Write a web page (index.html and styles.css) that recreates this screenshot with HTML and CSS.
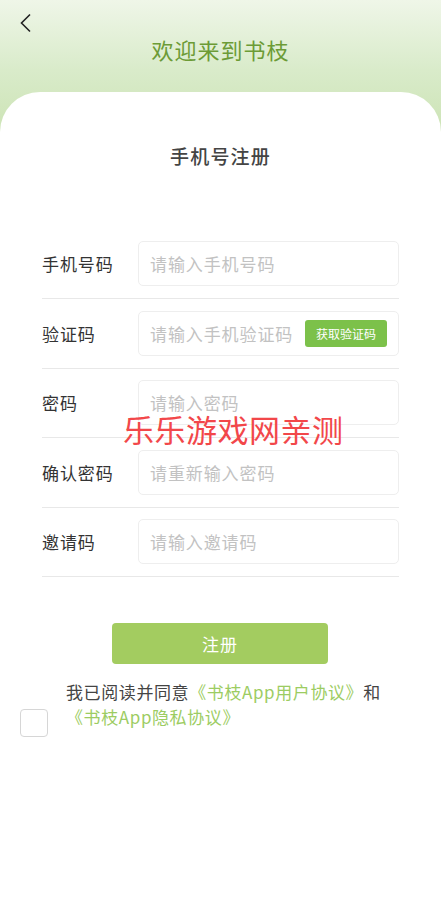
FILE: index.html
```html
<!DOCTYPE html>
<html lang="zh-CN">
<head>
    <meta charset="UTF-8">
    <meta name="viewport" content="width=device-width, initial-scale=1.0">
    <link rel="stylesheet" href="styles.css">
</head>
<body>
    <div class="page">
        <div class="header">
            <div class="back">
                <svg width="14" height="20" viewBox="0 0 14 20"><path d="M11 1.5 L2.5 10 L11 18.5" fill="none" stroke="#222" stroke-width="1.6"/></svg>
            </div>
            <h1>欢迎来到书枝</h1>
        </div>
        <div class="card">
            <h2>手机号注册</h2>
            <div class="form">
                <div class="row">
                    <div class="label">手机号码</div>
                    <div class="field"><span class="placeholder">请输入手机号码</span></div>
                </div>
                <div class="row">
                    <div class="label">验证码</div>
                    <div class="field">
                        <span class="placeholder">请输入手机验证码</span>
                        <div class="code-btn">获取验证码</div>
                    </div>
                </div>
                <div class="row">
                    <div class="label">密码</div>
                    <div class="field"><span class="placeholder">请输入密码</span></div>
                </div>
                <div class="row">
                    <div class="label">确认密码</div>
                    <div class="field"><span class="placeholder">请重新输入密码</span></div>
                </div>
                <div class="row">
                    <div class="label">邀请码</div>
                    <div class="field"><span class="placeholder">请输入邀请码</span></div>
                </div>
                <div class="watermark">乐乐游戏网亲测</div>
            </div>
            <div class="submit">注册</div>
            <div class="agree">
                <div class="checkbox"></div>
                <div class="agree-text">我已阅读并同意<span class="link">《书枝App用户协议》</span>和<br><span class="link">《书枝App隐私协议》</span></div>
            </div>
        </div>
    </div>
</body>
</html>
```

FILE: styles.css
```css
body {
    margin: 0;
    font-family: "Noto Sans CJK SC", "Noto Sans", sans-serif;
    background-color: #fff;
}
.page {
    width: 441px;
    height: 906px;
    overflow: hidden;
    background: linear-gradient(180deg, #eff6e8 0px, #d9ebca 70px, #cde4b6 130px);
}
.header {
    height: 92px;
    position: relative;
}
.back {
    position: absolute;
    left: 19px;
    top: 13px;
}
.header h1 {
    margin: 0;
    padding-top: 32px;
    text-align: center;
    font-size: 22px;
    font-weight: 400;
    line-height: 34px;
    letter-spacing: 1px;
    color: #6c9b36;
}
.card {
    background-color: #fff;
    border-radius: 40px 40px 0 0;
    height: 814px;
    box-sizing: border-box;
    padding-top: 51px;
}
.card h2 {
    margin: 0;
    text-align: center;
    font-size: 19px;
    font-weight: 500;
    line-height: 26px;
    letter-spacing: 1.2px;
    color: #444;
}
.form {
    position: relative;
    margin: 72px 42px 0 42px;
}
.row {
    display: flex;
    align-items: center;
    height: 69.5px;
    border-bottom: 1px solid #e8e8e8;
    box-sizing: border-box;
    padding-bottom: 12px;
    padding-top: 12px;
}
.row:first-child {
    height: 58px;
    padding-top: 0;
}
.label {
    width: 96px;
    font-size: 17px;
    letter-spacing: 0.9px;
    color: #333;
}
.field {
    flex: 1;
    height: 45px;
    border: 1px solid #eeeeee;
    border-radius: 5px;
    box-sizing: border-box;
    display: flex;
    align-items: center;
    justify-content: space-between;
    padding: 0 11px 0 11px;
}
.placeholder {
    font-size: 17px;
    letter-spacing: 0.9px;
    color: #c2c2c2;
}
.code-btn {
    background-color: #7cc14a;
    color: #fff;
    font-size: 12px;
    border-radius: 3px;
    height: 27px;
    line-height: 27px;
    padding: 0 11px;
}
.watermark {
    position: absolute;
    left: 81px;
    top: 168px;
    font-size: 31px;
    line-height: 40px;
    color: #f2474a;
    letter-spacing: 0.5px;
}
.submit {
    width: 216px;
    height: 41px;
    margin: 46px 0 0 112px;
    background-color: #a3cc60;
    border-radius: 4px;
    color: #fff;
    font-size: 17px;
    letter-spacing: 1px;
    text-align: center;
    line-height: 41px;
}
.agree {
    display: flex;
    align-items: flex-start;
    margin: 15px 0 0 20px;
}
.checkbox {
    width: 28px;
    height: 28px;
    border: 1.5px solid #d6d6d6;
    border-radius: 4px;
    box-sizing: border-box;
    flex-shrink: 0;
    margin-top: 30px;
}
.agree-text {
    margin-left: 18px;
    font-size: 17px;
    line-height: 25px;
    letter-spacing: 0.6px;
    color: #444;
}
.link {
    color: #9ccc62;
}
```
